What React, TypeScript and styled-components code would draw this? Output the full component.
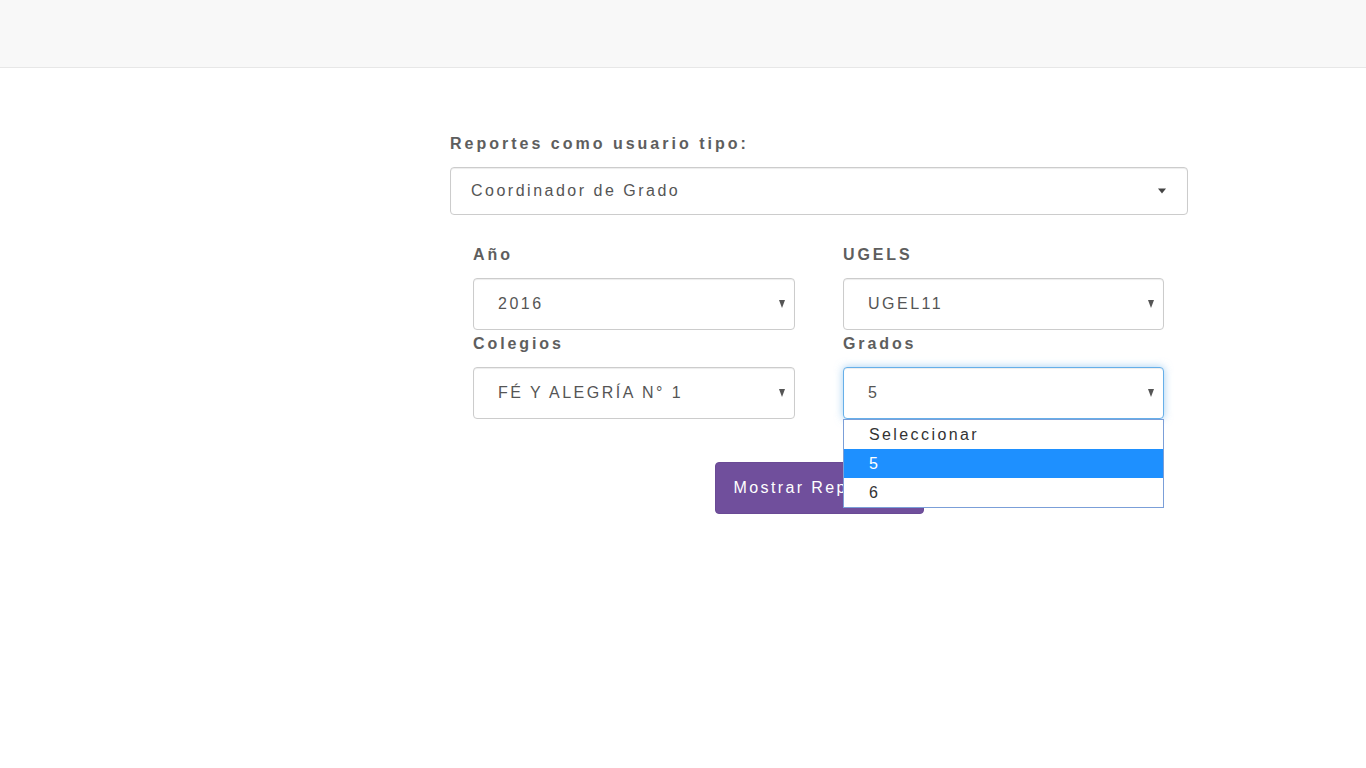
import styled, { createGlobalStyle, css } from "styled-components"

const GlobalStyle = createGlobalStyle`
    html, body {
        margin: 0;
        padding: 0;
        background: #fff;
        font-family: "Liberation Sans", Arial, sans-serif;
    }
`

const Navbar = styled.header`
    height: 67px;
    background: #f8f8f8;
    border-bottom: 1px solid #e7e7e7;
`

const Main = styled.main`
    width: 738px;
    margin-left: 450px;
    padding-top: 66px;
`

const Label = styled.label`
    display: block;
    font-size: 16px;
    line-height: 20px;
    font-weight: 700;
    letter-spacing: 2.9px;
    color: #5e5e5e;
`

const TopLabel = styled(Label)`
    letter-spacing: 3px;
    margin-bottom: 13px;
`

const Caret = styled.span<{ $small?: boolean }>`
    position: absolute;
    top: 50%;
    width: 0;
    height: 0;
    border-left: 4px solid transparent;
    border-right: 4px solid transparent;
    border-top: 5px solid #444;
    transform: translateY(-50%);

    ${({ $small }) =>
        $small
            ? css`
                  right: 21px;
              `
            : css`
                  right: 9px;
                  border-left-width: 3.5px;
                  border-right-width: 3.5px;
                  border-top-width: 8px;
                  border-top-color: #555;
              `}
`

const Select = styled.div<{ $focused?: boolean; $height: number; $pad: number }>`
    position: relative;
    box-sizing: border-box;
    height: ${({ $height }) => $height}px;
    padding-left: ${({ $pad }) => $pad}px;
    display: flex;
    align-items: center;
    border: 1px solid #ccc;
    border-radius: 4px;
    background: #fff;
    color: #555;
    font-size: 16px;
    letter-spacing: 2.5px;
    box-shadow: inset 0 1px 1px rgba(0, 0, 0, 0.075);

    ${({ $focused }) =>
        $focused &&
        css`
            border-color: #66afe9;
            box-shadow: inset 0 1px 1px rgba(0, 0, 0, 0.075), 0 0 8px rgba(102, 175, 233, 0.6);
        `}
`

const Grid = styled.div`
    display: grid;
    grid-template-columns: 322px 321px;
    column-gap: 48px;
    padding: 30px 23px 0;
`

const Field = styled.div`
    position: relative;
    display: flex;
    flex-direction: column;
    gap: 13px;
    margin-bottom: 4px;
`

const OptionList = styled.ul`
    position: absolute;
    top: 100%;
    left: -1px;
    right: -1px;
    margin: 1px 0 0;
    padding: 0;
    list-style: none;
    background: #fff;
    border: 1px solid #7b9fd8;
    z-index: 5;
`

const Option = styled.li<{ $active?: boolean }>`
    height: 29px;
    line-height: 29px;
    padding-left: 25px;
    font-size: 16px;
    letter-spacing: 2.4px;
    color: ${({ $active }) => ($active ? "#fff" : "#333")};
    background: ${({ $active }) => ($active ? "#1e90ff" : "#fff")};
`

const Actions = styled.div`
    display: flex;
    justify-content: center;
    padding-top: 39px;
`

const Button = styled.button`
    width: 209px;
    height: 52px;
    border: 1px solid #6a4a95;
    border-radius: 4px;
    background: #704f9c;
    color: #fff;
    font-family: "Liberation Sans", Arial, sans-serif;
    font-size: 16px;
    letter-spacing: 2.4px;
    text-align: left;
    padding-left: 18px;
    cursor: pointer;
`

const fields = [
    { label: "Año", value: "2016" },
    { label: "UGELS", value: "UGEL11" },
    { label: "Colegios", value: "FÉ Y ALEGRÍA N° 1" },
]

export default function App() {
    return (
        <>
            <GlobalStyle />
            <Navbar />
            <Main>
                <TopLabel>Reportes como usuario tipo:</TopLabel>
                <Select $height={48} $pad={20}>
                    Coordinador de Grado
                    <Caret $small />
                </Select>
                <Grid>
                    {fields.map((f) => (
                        <Field key={f.label}>
                            <Label>{f.label}</Label>
                            <Select $height={52} $pad={24}>
                                {f.value}
                                <Caret />
                            </Select>
                        </Field>
                    ))}
                    <Field>
                        <Label>Grados</Label>
                        <Select $height={52} $pad={24} $focused>
                            5
                            <Caret />
                            <OptionList>
                                <Option>Seleccionar</Option>
                                <Option $active>5</Option>
                                <Option>6</Option>
                            </OptionList>
                        </Select>
                    </Field>
                </Grid>
                <Actions>
                    <Button>Mostrar Reporte</Button>
                </Actions>
            </Main>
        </>
    )
}
